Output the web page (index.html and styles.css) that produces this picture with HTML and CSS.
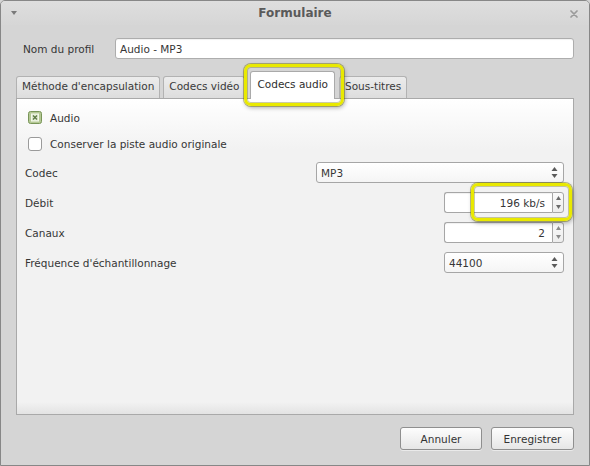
FILE: index.html
```html
<!DOCTYPE html>
<html lang="fr">
<head>
<meta charset="utf-8">
<title>Formulaire</title>
<link rel="stylesheet" href="styles.css">
</head>
<body>
<div class="window">
  <div class="titlebar">
    <span class="menu-arrow"></span>
    <span class="title">Formulaire</span>
    <span class="close"><svg width="8" height="8" viewBox="0 0 8 8"><path d="M1 1L7 7M7 1L1 7" stroke="#9a9a9a" stroke-width="1.7" stroke-linecap="round"/></svg></span>
  </div>
  <div class="body">
    <div class="profile-row">
      <span class="profile-label">Nom du profil</span>
      <div class="entry">Audio - MP3</div>
    </div>
    <div class="tabs">
      <div class="tab">Méthode d'encapsulation</div>
      <div class="tab">Codecs vidéo</div>
      <div class="tab active">Codecs audio</div>
      <div class="tab">Sous-titres</div>
    </div>
    <div class="panel">
      <div class="check-row first">
        <svg class="checkbox" width="14" height="13" viewBox="0 0 14 13"><rect x="0.5" y="0.5" width="13" height="12" rx="2" fill="#b4c894" stroke="#799558"/><rect x="3.5" y="3" width="7" height="7" fill="#dfe9d0" stroke="#f3f7ec"/><path d="M5 4.5L9 8.5M9 4.5L5 8.5" stroke="#5a7640" stroke-width="1.2"/></svg>
        <span>Audio</span>
      </div>
      <div class="check-row second">
        <svg class="checkbox" width="14" height="14" viewBox="0 0 14 14"><rect x="0.5" y="0.5" width="13" height="13" rx="2.5" fill="#ffffff" stroke="#9a9a9a"/></svg>
        <span>Conserver la piste audio originale</span>
      </div>
      <div class="form-row codec-row">
        <span>Codec</span>
        <div class="combo wide">
          <span>MP3</span>
          <svg class="arrows" width="7" height="13" viewBox="0 0 7 13"><path d="M3.5 1L6.5 5H0.5Z M3.5 12L0.5 8H6.5Z" fill="#5a5a5a"/></svg>
        </div>
      </div>
      <div class="form-row">
        <span>Débit</span>
        <div class="spin">
          <div class="spin-entry">196 kb/s</div>
          <div class="spin-buttons">
            <svg width="5" height="4" viewBox="0 0 5 4"><path d="M2.5 0L5 4H0Z" fill="#6a6a6a"/></svg>
            <svg width="5" height="4" viewBox="0 0 5 4"><path d="M2.5 4L0 0H5Z" fill="#6a6a6a"/></svg>
          </div>
        </div>
      </div>
      <div class="form-row">
        <span>Canaux</span>
        <div class="spin">
          <div class="spin-entry">2</div>
          <div class="spin-buttons">
            <svg width="5" height="4" viewBox="0 0 5 4"><path d="M2.5 0L5 4H0Z" fill="#8a8a8a"/></svg>
            <svg width="5" height="4" viewBox="0 0 5 4"><path d="M2.5 4L0 0H5Z" fill="#8a8a8a"/></svg>
          </div>
        </div>
      </div>
      <div class="form-row">
        <span>Fréquence d'échantillonnage</span>
        <div class="combo small">
          <span>44100</span>
          <svg class="arrows" width="7" height="13" viewBox="0 0 7 13"><path d="M3.5 1L6.5 5H0.5Z M3.5 12L0.5 8H6.5Z" fill="#5a5a5a"/></svg>
        </div>
      </div>
    </div>
    <div class="buttons">
      <button class="btn cancel">Annuler</button>
      <button class="btn save">Enregistrer</button>
    </div>
  </div>
  <div class="highlight h-tab"></div>
  <div class="highlight h-bitrate"></div>
</div>
</body>
</html>
```

FILE: styles.css
```css
html, body {
  margin: 0;
  padding: 0;
  background: #d5d5d5;
}

body {
  font-family: "DejaVu Sans", "Liberation Sans", sans-serif;
  font-size: 10.5px;
  color: #363636;
}

.window {
  position: relative;
  width: 590px;
  height: 466px;
  box-sizing: border-box;
  border: 1px solid #878787;
  border-radius: 5px 5px 0 0;
  background: #d5d5d5;
  display: flex;
  flex-direction: column;
  overflow: hidden;
}

.titlebar {
  flex: none;
  height: 24px;
  display: grid;
  grid-template-columns: 1fr auto 1fr;
  align-items: center;
  background: linear-gradient(#dedede, #d6d6d6);
}

.menu-arrow {
  justify-self: start;
  margin-left: 10px;
  width: 0;
  height: 0;
  border-left: 3.5px solid transparent;
  border-right: 3.5px solid transparent;
  border-top: 4px solid #7a7a7a;
}

.title {
  font-weight: bold;
  font-size: 12px;
  color: #5a5a5a;
  margin-bottom: 1px;
}

.close {
  justify-self: end;
  margin-right: 11px;
  display: flex;
  margin-top: 2px;
}

.body {
  flex: 1;
  display: flex;
  flex-direction: column;
  padding: 13px 15px 15px 15px;
  min-height: 0;
}

.profile-row {
  display: flex;
  align-items: center;
  height: 21px;
}

.profile-label {
  width: 99px;
  padding-left: 7px;
  box-sizing: border-box;
}

.entry {
  flex: 1;
  height: 21px;
  box-sizing: border-box;
  border: 1px solid #adadad;
  border-radius: 3px;
  background: #fff;
  padding: 0 4px;
  display: flex;
  align-items: center;
  box-shadow: inset 0 1px 1px rgba(0, 0, 0, 0.06);
}

.tabs {
  display: flex;
  align-items: flex-end;
  height: 28px;
  margin-top: 12px;
  margin-bottom: -1px;
  position: relative;
  z-index: 1;
}

.tab {
  height: 22px;
  box-sizing: border-box;
  margin-bottom: 1px;
  padding: 0 5px 4px 5px;
  border: 1px solid #b2b2b2;
  border-bottom: none;
  border-radius: 3px 3px 0 0;
  background: linear-gradient(#ececec, #dddddd);
  margin-right: 3px;
  display: flex;
  align-items: center;
  color: #3a3a3a;
}

.tab.active {
  height: 28px;
  margin-bottom: 0;
  margin-left: 2px;
  margin-right: 4px;
  padding: 0 6px 4px 6px;
  background: #ffffff;
  border-color: #aaaaaa;
  color: #2e2e2e;
}

.panel {
  flex: 1;
  min-height: 0;
  border: 1px solid #a9a9a9;
  background: linear-gradient(to bottom, #ffffff 0, #f2f2f2 50px, #f2f2f2 calc(100% - 12px), #e3e3e3 100%);
  padding: 8px 9px 0 8px;
  display: flex;
  flex-direction: column;
}

.check-row {
  height: 21px;
  display: flex;
  align-items: center;
  padding-left: 3px;
}

.check-row .checkbox {
  flex: none;
  margin-right: 8px;
}

.check-row.second {
  margin-top: 5px;
}

.form-row {
  height: 21px;
  display: flex;
  align-items: center;
  justify-content: space-between;
  margin-top: 9px;
}

.form-row.codec-row {
  margin-top: 8px;
}

.combo {
  height: 21px;
  box-sizing: border-box;
  border: 1px solid #a6a6a6;
  border-radius: 3px;
  background: linear-gradient(#ffffff, #f5f5f5);
  display: flex;
  align-items: center;
  justify-content: space-between;
  padding: 0 5px 0 4px;
}

.combo.wide {
  width: 248px;
}

.combo.small {
  width: 120px;
}

.spin {
  width: 120px;
  height: 21px;
  display: flex;
}

.spin-entry {
  flex: 1;
  box-sizing: border-box;
  border: 1px solid #a6a6a6;
  border-right: none;
  border-radius: 3px 0 0 3px;
  background: #ffffff;
  display: flex;
  align-items: center;
  justify-content: flex-end;
  padding-right: 7px;
  box-shadow: inset 0 1px 1px rgba(0, 0, 0, 0.06);
}

.spin-buttons {
  width: 12px;
  box-sizing: border-box;
  border: 1px solid #a6a6a6;
  border-radius: 0 3px 3px 0;
  background: linear-gradient(#fafafa, #ededed);
  display: flex;
  flex-direction: column;
  align-items: center;
  justify-content: space-between;
  padding: 3px 0 3px 0;
}

.spin-buttons svg {
  display: block;
}

.buttons {
  display: flex;
  justify-content: flex-end;
  gap: 9px;
  margin-top: 12px;
  height: 23px;
}

.btn {
  height: 23px;
  box-sizing: border-box;
  border: 1px solid #8f8f8f;
  border-radius: 3px;
  background: linear-gradient(#fdfdfd, #e6e6e6);
  font-family: "DejaVu Sans", "Liberation Sans", sans-serif;
  font-size: 10.5px;
  color: #333;
  padding: 0;
  box-shadow: 0 1px 0 rgba(255, 255, 255, 0.5);
}

.btn.cancel {
  width: 82px;
}

.btn.save {
  width: 83px;
}

.highlight {
  position: absolute;
  box-sizing: border-box;
  border: 3px solid #e9e900;
  border-radius: 7px;
  box-shadow: 0 0 0 1px rgba(110, 110, 0, 0.45), 1px 2px 4px rgba(0, 0, 0, 0.3), inset 0 0 0 1px rgba(110, 110, 0, 0.35);
  z-index: 5;
}

.h-tab {
  left: 243px;
  top: 63px;
  width: 100px;
  height: 42px;
}

.h-bitrate {
  left: 470px;
  top: 182px;
  width: 101px;
  height: 38px;
}
```
